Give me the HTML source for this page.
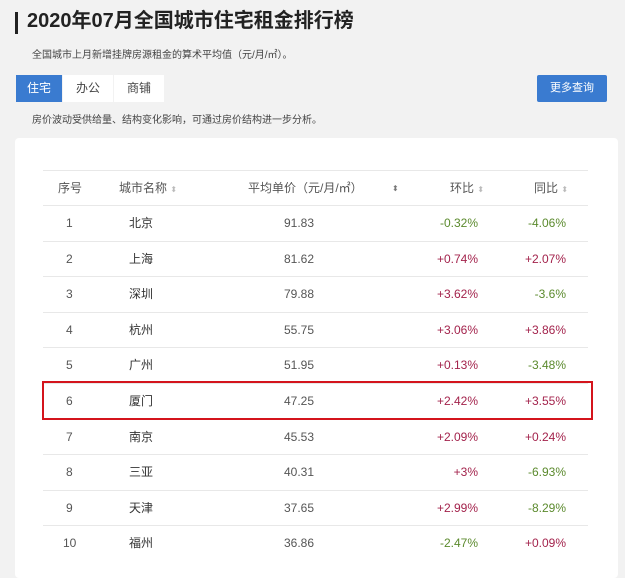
<!DOCTYPE html>
<html><head><meta charset="utf-8"><style>
*{margin:0;padding:0;box-sizing:border-box}
body{width:625px;height:573px;overflow:hidden;background:#f2f2f2;font-family:"Liberation Sans","Noto Sans CJK SC",sans-serif;color:#333;position:relative}
.abs{position:absolute;white-space:nowrap}
.bar{left:15px;top:12px;width:3px;height:22px;background:#222}
.title{left:27px;top:9px;font-size:20px;font-weight:bold;color:#222;line-height:24px}
.sub{left:32px;top:46px;font-size:10px;color:#444}
.tab{top:75px;height:27px;line-height:27px;text-align:center;font-size:12px;background:#fff;color:#444}
.btn{left:537px;top:75px;width:70px;height:27px;line-height:27px;text-align:center;background:#3a7bd0;color:#fff;font-size:11px;border-radius:2px}
.note{left:32px;top:111px;font-size:10px;color:#444}
.card{left:15px;top:138px;width:603px;height:440px;background:#fff;border-radius:4px}
.hl{left:43px;width:545px;height:1px;background:#e8e8e8}
.c{font-size:12px;color:#555;height:36px;line-height:36px}
.g{color:#5b8a2d}.r{color:#a3234c}
.sort{color:#bbb;font-size:8px}
.box{left:42px;top:381px;width:551px;height:39px;border:2px solid #d4141c}
</style></head><body>
<div class="abs bar"></div>
<div class="abs title">2020年07月全国城市住宅租金排行榜</div>
<div class="abs sub">全国城市上月新增挂牌房源租金的算术平均值（元/月/㎡）。</div>
<div class="abs tab" style="left:16px;width:46px;background:#3a7bd0;color:#fff">住宅</div>
<div class="abs tab" style="left:63px;width:50px">办公</div>
<div class="abs tab" style="left:114px;width:50px">商铺</div>
<div class="abs btn">更多查询</div>
<div class="abs note">房价波动受供给量、结构变化影响，可通过房价结构进一步分析。</div>
<div class="abs card"></div>
<div class="abs hl" style="top:170px"></div>
<div class="abs c" style="left:58px;top:170px">序号</div>
<div class="abs c" style="left:119px;top:170px">城市名称 <span class="sort">⬍</span></div>
<div class="abs c" style="left:248px;top:170px">平均单价（元/月/㎡）</div>
<div class="abs c sort" style="left:392px;top:171px;color:#777">⬍</div>
<div class="abs c" style="left:450px;top:170px">环比 <span class="sort">⬍</span></div>
<div class="abs c" style="left:534px;top:170px">同比 <span class="sort">⬍</span></div>
<div id="rows"></div>
<div class="abs box"></div>
<script>
var d=[["1","北京","91.83","-0.32%","-4.06%"],["2","上海","81.62","+0.74%","+2.07%"],["3","深圳","79.88","+3.62%","-3.6%"],["4","杭州","55.75","+3.06%","+3.86%"],["5","广州","51.95","+0.13%","-3.48%"],["6","厦门","47.25","+2.42%","+3.55%"],["7","南京","45.53","+2.09%","+0.24%"],["8","三亚","40.31","+3%","-6.93%"],["9","天津","37.65","+2.99%","-8.29%"],["10","福州","36.86","-2.47%","+0.09%"]];
var h="";
d.forEach(function(r,i){var y=205+i*35.6;
h+='<div class="abs hl" style="top:'+Math.round(y)+'px"></div>';
var t=Math.round(y);
h+='<div class="abs c" style="left:'+(r[0].length>1?63:66)+'px;top:'+t+'px">'+r[0]+'</div>';
h+='<div class="abs c" style="left:129px;top:'+t+'px;color:#333">'+r[1]+'</div>';
h+='<div class="abs c" style="left:284px;top:'+t+'px">'+r[2]+'</div>';
h+='<div class="abs c '+(r[3][0]=="-"?"g":"r")+'" style="right:147px;top:'+t+'px">'+r[3]+'</div>';
h+='<div class="abs c '+(r[4][0]=="-"?"g":"r")+'" style="right:59px;top:'+t+'px">'+r[4]+'</div>';
});
document.getElementById("rows").innerHTML=h;
</script>
</body></html>
